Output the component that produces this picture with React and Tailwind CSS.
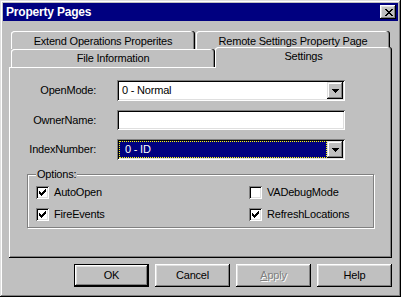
import React from "react";

const CloseX = () => (
  <svg width="8" height="7" viewBox="0 0 8 7" shapeRendering="crispEdges">
    <path
      fill="#000"
      d="M0 0h2v1H0z M6 0h2v1H6z M1 1h2v1H1z M5 1h2v1H5z M2 2h4v1H2z M3 3h2v1H3z M2 4h4v1H2z M1 5h2v1H1z M5 5h2v1H5z M0 6h2v1H0z M6 6h2v1H6z"
    />
  </svg>
);

const Arrow = () => (
  <svg width="7" height="4" viewBox="0 0 7 4" shapeRendering="crispEdges">
    <path fill="#000" d="M0 0h7v1H0z M1 1h5v1H1z M2 2h3v1H2z M3 3h1v1H3z" />
  </svg>
);

const Check = () => (
  <svg width="7" height="7" viewBox="0 0 7 7" shapeRendering="crispEdges">
    <path
      fill="#000"
      d="M6 0h1v1H6z M5 1h2v1H5z M0 2h1v1H0z M4 2h3v1H4z M0 3h2v1H0z M3 3h3v1H3z M0 4h5v1H0z M1 5h3v1H1z M2 6h1v1H2z"
    />
  </svg>
);

function Tab({ className, children }) {
  return (
    <div
      className={`h-full flex items-center justify-center rounded-t-[3px] bg-[#c0c0c0] shadow-[inset_-1px_0_#000,inset_-2px_0_#808080,inset_1px_1px_#fff] ${className}`}
    >
      {children}
    </div>
  );
}

function DropButton() {
  return (
    <div className="w-[16px] h-[17px] shrink-0 bg-[#c0c0c0] flex items-center justify-center shadow-[inset_-1px_-1px_#000,inset_1px_1px_#dfdfdf,inset_-2px_-2px_#808080,inset_2px_2px_#fff]">
      <Arrow />
    </div>
  );
}

function Row({ label, className = "", children }) {
  return (
    <div className={`flex items-center ${className}`}>
      <div className="w-[87px] text-right">{label}</div>
      <div className="ml-[21px]">{children}</div>
    </div>
  );
}

function CheckItem({ checked, children }) {
  return (
    <div className="flex items-center gap-[5px] h-[13px]">
      <div className="w-[13px] h-[13px] bg-white flex items-center justify-center shadow-[inset_1px_1px_#808080,inset_-1px_-1px_#fff,inset_2px_2px_#000,inset_-2px_-2px_#dfdfdf]">
        {checked ? <Check /> : null}
      </div>
      <span>{children}</span>
    </div>
  );
}

function Button({ isDefault, children }) {
  return (
    <div
      className={`w-[75px] h-[23px] flex items-center justify-center bg-[#c0c0c0] shadow-[inset_-1px_-1px_#000,inset_1px_1px_#fff,inset_-2px_-2px_#808080,inset_2px_2px_#dfdfdf] ${
        isDefault ? "border border-black" : ""
      }`}
    >
      {children}
    </div>
  );
}

export default function App() {
  return (
    <div className="w-[401px] h-[297px] bg-[#c0c0c0] p-[3px] flex flex-col text-black font-['Liberation_Sans',Arial,sans-serif] text-[11px] leading-[13px] tracking-[-0.2px] shadow-[inset_-1px_-1px_#000,inset_1px_1px_#dfdfdf,inset_-2px_-2px_#808080,inset_2px_2px_#fff]">
      {/* Title bar */}
      <div className="h-[18px] bg-[#000080] flex items-center justify-between pl-[3px] pr-[2px]">
        <span className="text-white font-bold text-[12px] tracking-[-0.2px]">Property Pages</span>
        <div className="w-[16px] h-[14px] bg-[#c0c0c0] flex items-center justify-center pl-[1px] shadow-[inset_-1px_-1px_#000,inset_1px_1px_#fff,inset_-2px_-2px_#808080,inset_2px_2px_#dfdfdf]">
          <CloseX />
        </div>
      </div>

      <div className="pl-[6px] flex flex-col">
        {/* Back row of tabs */}
        <div className="mt-[10px] ml-[2px] h-[18px] flex">
          <Tab className="w-[184px] pt-[2px]">Extend Operations Properites</Tab>
          <Tab className="w-[194px] ml-[1px] pt-[2px]">Remote Settings Property Page</Tab>
        </div>
        {/* Front row of tabs */}
        <div className="ml-[2px] h-[18px] flex items-end">
          <Tab className="w-[204px] pt-[1px]">File Information</Tab>
          <div className="relative z-10 w-[177px] h-[21px] -mb-[1px] flex items-center justify-center pb-[3px] rounded-t-[3px] bg-[#c0c0c0] shadow-[inset_-1px_0_#000,inset_-2px_0_#808080,inset_1px_1px_#fff]">
            Settings
          </div>
        </div>

        {/* Panel */}
        <div className="w-[383px] h-[191px] pt-[13px] flex flex-col shadow-[inset_-1px_-1px_#000,inset_1px_1px_#fff,inset_-2px_-2px_#808080]">
          <Row label="OpenMode:">
            <div className="w-[228px] h-[21px] bg-white p-[2px] flex shadow-[inset_1px_1px_#808080,inset_-1px_-1px_#fff,inset_2px_2px_#000,inset_-2px_-2px_#dfdfdf]">
              <div className="flex-1 flex items-center pl-[3px]">0 - Normal</div>
              <DropButton />
            </div>
          </Row>
          <Row label="OwnerName:" className="mt-[9px]">
            <div className="w-[228px] h-[20px] bg-white shadow-[inset_1px_1px_#808080,inset_-1px_-1px_#fff,inset_2px_2px_#000,inset_-2px_-2px_#dfdfdf]" />
          </Row>
          <Row label="IndexNumber:" className="mt-[9px]">
            <div className="w-[228px] h-[21px] bg-white p-[2px] flex shadow-[inset_1px_1px_#808080,inset_-1px_-1px_#fff,inset_2px_2px_#000,inset_-2px_-2px_#dfdfdf]">
              <div className="flex-1 flex items-center pl-[5px] bg-[#000080] text-white border border-dotted border-[#ffff00]">
                0 - ID
              </div>
              <DropButton />
            </div>
          </Row>

          {/* Options group */}
          <div className="relative mt-[14px] ml-[18px] w-[347px] h-[54px] border border-[#808080] shadow-[inset_1px_1px_#fff,1px_1px_#fff] pt-[11px] pl-[8px]">
            <span className="absolute left-[8px] top-[-7px] bg-[#c0c0c0] px-[1px]">Options:</span>
            <div className="grid grid-cols-[213px_1fr] gap-y-[9px]">
              <CheckItem checked>AutoOpen</CheckItem>
              <CheckItem>VADebugMode</CheckItem>
              <CheckItem checked>FireEvents</CheckItem>
              <CheckItem checked>RefreshLocations</CheckItem>
            </div>
          </div>
        </div>

        {/* Buttons */}
        <div className="mt-[6px] w-[383px] flex justify-end gap-[6px]">
          <Button isDefault>OK</Button>
          <Button>Cancel</Button>
          <Button>
            <span className="text-[#808080] [text-shadow:1px_1px_#fff]">
              <u>A</u>pply
            </span>
          </Button>
          <Button>Help</Button>
        </div>
      </div>
    </div>
  );
}
